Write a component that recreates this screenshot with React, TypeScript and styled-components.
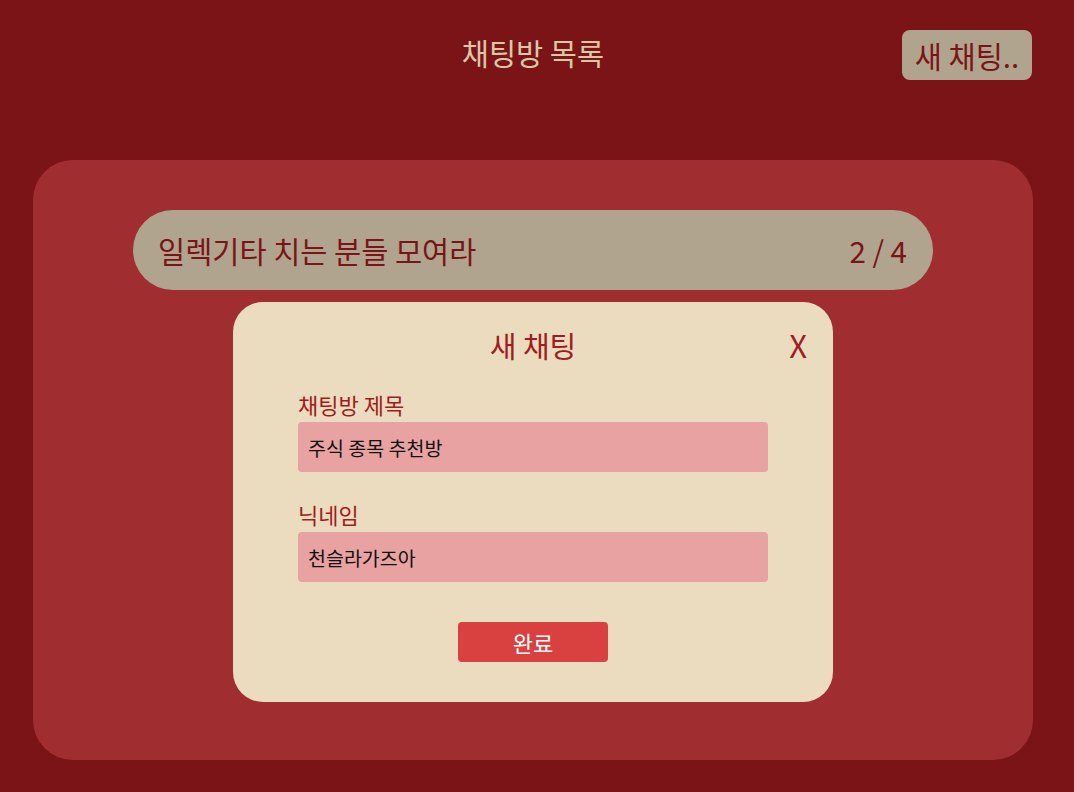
import React from "react";
import styled, { createGlobalStyle } from "styled-components";

const Global = createGlobalStyle`
  html, body { margin: 0; padding: 0; background: #7b1416; }
  body { font-family: "Noto Sans CJK KR", "Noto Sans", sans-serif; }
  * { box-sizing: border-box; }
`;

const Page = styled.div`
  width: 1000px;
  margin-left: 33px;
  padding-top: 30px;
  height: 792px;
`;

const Header = styled.header`
  position: relative;
  height: 50px;
  display: flex;
  align-items: flex-start;
  justify-content: center;
`;

const Title = styled.h1`
  margin: 0;
  font-size: 29.5px;
  font-weight: 400;
  color: #d9c8a8;
  line-height: 44px;
`;

const NewButton = styled.button`
  position: absolute;
  right: 1px;
  top: 0;
  height: 50px;
  width: 130px;
  border: none;
  border-radius: 8px;
  background: #b0a48e;
  color: #7b1416;
  font-family: inherit;
  font-size: 29.5px;
  line-height: 44px;
  padding: 0;
`;

const Panel = styled.main`
  position: relative;
  margin-top: 80px;
  height: 600px;
  border-radius: 40px;
  background: #a02e30;
  padding: 50px 100px;
`;

const RoomItem = styled.div`
  height: 80px;
  border-radius: 40px;
  background: #b0a48e;
  color: #7b1416;
  display: flex;
  align-items: center;
  justify-content: space-between;
  padding: 0 26px 0 25px;
  font-size: 29.5px;
`;

const Modal = styled.div`
  position: absolute;
  left: 200px;
  top: 142px;
  width: 600px;
  height: 400px;
  border-radius: 30px;
  background: #ebdbbf;
  display: flex;
  flex-direction: column;
  align-items: center;
  padding-top: 23px;
`;

const ModalTitle = styled.h2`
  margin: 0;
  font-size: 29px;
  font-weight: 400;
  line-height: 40px;
  color: #a01c1e;
`;

const Close = styled.span`
  position: absolute;
  right: 26px;
  top: 23px;
  line-height: 40px;
  font-size: 31px;
  color: #a01c1e;
`;

const Field = styled.label<{ $gap: number }>`
  display: flex;
  flex-direction: column;
  width: 470px;
  margin-top: ${(p) => p.$gap}px;
`;

const LabelText = styled.span`
  font-size: 22px;
  line-height: 30px;
  color: #a01c1e;
  margin-bottom: 3px;
`;

const Input = styled.input`
  height: 50px;
  border: none;
  border-radius: 4px;
  background: #e8a2a2;
  padding: 0 10px;
  font-family: inherit;
  font-size: 19.5px;
  color: #111;
  outline: none;
`;

const Done = styled.button`
  margin-top: 40px;
  width: 150px;
  height: 40px;
  border: none;
  border-radius: 4px;
  background: #d94040;
  color: #fff;
  font-family: inherit;
  font-size: 22px;
  line-height: 36px;
  padding: 0;
`;

export default function App() {
  return (
    <>
      <Global />
      <Page>
        <Header>
          <Title>채팅방 목록</Title>
          <NewButton>새 채팅..</NewButton>
        </Header>
        <Panel>
          <RoomItem>
            <span>일렉기타 치는 분들 모여라</span>
            <span>2 / 4</span>
          </RoomItem>
          <Modal>
            <ModalTitle>새 채팅</ModalTitle>
            <Close>X</Close>
            <Field $gap={24}>
              <LabelText>채팅방 제목</LabelText>
              <Input defaultValue="주식 종목 추천방" />
            </Field>
            <Field $gap={27}>
              <LabelText>닉네임</LabelText>
              <Input defaultValue="천슬라가즈아" />
            </Field>
            <Done>완료</Done>
          </Modal>
        </Panel>
      </Page>
    </>
  );
}
